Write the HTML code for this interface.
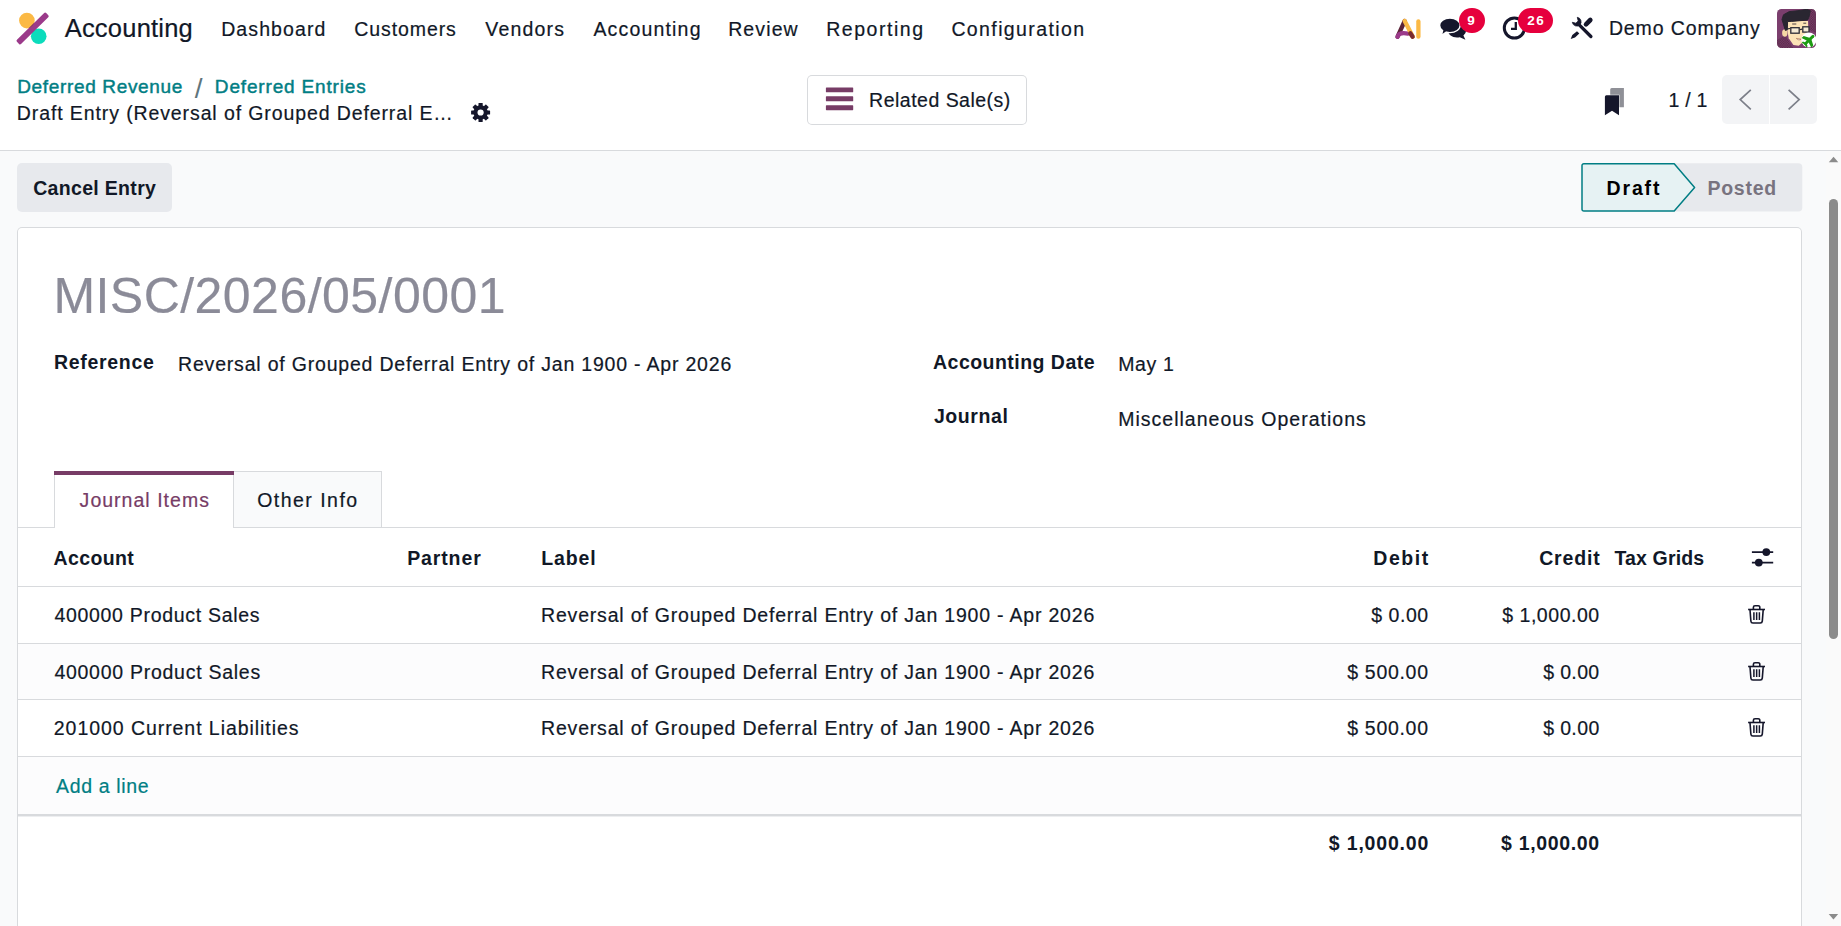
<!DOCTYPE html>
<html lang="en">
<head>
<meta charset="utf-8">
<title>Odoo - Draft Entry</title>
<style>
*{box-sizing:border-box;margin:0;padding:0}
html,body{width:1841px;height:926px;overflow:hidden;background:#fff}
body{position:relative;font-family:"Liberation Sans",sans-serif;color:#111827;-webkit-font-smoothing:antialiased}
.a{position:absolute;display:block}
.t{position:absolute;display:block;white-space:nowrap;font-weight:400;text-decoration:none;-webkit-text-stroke:.2px currentColor}
.b{font-weight:700;-webkit-text-stroke:0}
.m{-webkit-text-stroke:.45px currentColor}
svg{position:absolute;display:block;overflow:visible}
button{font:inherit;border:0;background:none;color:inherit}
ul,ol{list-style:none}
table{border-collapse:collapse}
.c-dark{color:#111827}.c-black{color:#000}.c-white{color:#fff}.c-teal{color:#017e84}
.c-sep{color:#5f757c;-webkit-text-stroke:0}.c-muted{color:#78737f}.c-title{color:#8b8b98}.c-brand{color:#773c66}
.navbar{background:#fff}
.cp{background:#fff;box-shadow:inset 0 -1px 0 0 #d8dadd}
.content{background:#f9fafb}
.badge{background:#e6003d;border-radius:12.5px}
.btn-sec{background:#e7e9ed;border-radius:5px}
.btn-out{background:#fff;box-shadow:inset 0 0 0 1px #d8dadd;border-radius:5px}
.pg{background:#f3f4f6}
.sheet{background:#fff;box-shadow:inset 0 0 0 1px #d8dadd;border-radius:5px 5px 0 0}
.hl{background:#d8dadd}
.stripe{background:#fcfcfd}
.tab-on{background:#fff;box-shadow:inset 0 4px 0 0 #773c66,inset 1px 0 0 0 #d8dadd,inset -1px 0 0 0 #d8dadd}
.tab-off{background:#f9fafb;box-shadow:inset 0 1px 0 0 #d8dadd,inset -1px 0 0 0 #d8dadd}
.sb{background:#fafafa}
.thumb{background:#8b8b8b;border-radius:4.5px}
</style>
</head>
<body>
 <header class="a navbar" style="left:0px;top:0px;width:1841px;height:58px">
  <a class="a brandlink" style="left:14px;top:6px;width:186px;height:46px">
   <svg viewBox="14 10 36 36" style="left:0px;top:4px;width:36px;height:36px"><circle cx="26.9" cy="20.6" r="7.8" fill="#fbb945"/><circle cx="38.7" cy="36.2" r="7.8" fill="#0bdcbc"/><rect x="12.100" y="25.600" width="41" height="5.800" rx="1.400" fill="#9b3a8a" transform="rotate(-44.500 32.600 28.500)"/><clipPath id="lgc"><circle cx="26.900" cy="20.600" r="7.800"/></clipPath><g clip-path="url(#lgc)"><rect x="12.100" y="25.600" width="41" height="5.800" fill="#8a4552" transform="rotate(-44.500 32.600 28.500)"/></g></svg>
   <span class="t c-dark" id="brand" style="left:50.67px;top:7px;font-size:25.5px;line-height:31px;letter-spacing:0.22px">Accounting</span>
  </a>
  <nav class="a menu" style="left:210px;top:6px;width:890px;height:46px">
   <a class="t c-dark" id="m1" style="left:11.17px;top:12px;font-size:19.5px;line-height:23px;letter-spacing:1.1px">Dashboard</a>
   <a class="t c-dark" id="m2" style="left:144.36px;top:12px;font-size:19.5px;line-height:23px;letter-spacing:0.9px">Customers</a>
   <a class="t c-dark" id="m3" style="left:275.33px;top:12px;font-size:19.5px;line-height:23px;letter-spacing:1.17px">Vendors</a>
   <a class="t c-dark" id="m4" style="left:383.4px;top:12px;font-size:19.5px;line-height:23px;letter-spacing:1.18px">Accounting</a>
   <a class="t c-dark" id="m5" style="left:518.17px;top:12px;font-size:19.5px;line-height:23px;letter-spacing:1.12px">Review</a>
   <a class="t c-dark" id="m6" style="left:616.17px;top:12px;font-size:19.5px;line-height:23px;letter-spacing:1.55px">Reporting</a>
   <a class="t c-dark" id="m7" style="left:741.4px;top:12px;font-size:19.5px;line-height:23px;letter-spacing:1.39px">Configuration</a>
  </nav>
  <div class="a systray" style="left:1385px;top:6px;width:440px;height:46px">
   <button class="a" style="left:4px;top:2px;width:40px;height:42px">
    <svg viewBox="1393 16 30 26" style="left:4px;top:8px;width:30px;height:26px"><path d="M1397.600 36.700L1404.700 21" stroke="#5c2338" stroke-width="4.300" stroke-linecap="round"/><path d="M1397.500 36.800C1398.800 32.600 1402.500 32.500 1408 33.600" stroke="#9b3a8a" stroke-width="4.300" stroke-linecap="round" fill="none"/><path d="M1404.700 21L1412.900 36.700" stroke="#fbb945" stroke-width="4.300" stroke-linecap="round"/><path d="M1410.300 33.200L1412.600 36.700" stroke="#7a2a2f" stroke-width="4.300" stroke-linecap="round"/><path d="M1418.400 21.400L1418.400 36.700" stroke="#fbb945" stroke-width="4.300" stroke-linecap="round"/></svg>
   </button>
   <button class="a" style="left:49px;top:0px;width:56px;height:46px">
    <svg viewBox="1437 15 32 27" style="left:3px;top:9px;width:32px;height:27px"><path d="M1457 23.6c5 0 9 3.1 9 7 0 1.9-1 3.6-2.6 4.9l2 4.2-5.6-2.4c-.9.2-1.8.3-2.8.3-5 0-9-3.100-9-7s4-7 9-7z" fill="#15162b"/><path d="M1449.9 18c5.700 0 10.300 3.300 10.300 7.300s-4.600 7.300-10.300 7.300c-1.300 0-2.500-.2-3.600-.5l-5 3.500 1.300-5c-1.900-1.300-3-3.200-3-5.300 0-4 4.600-7.300 10.300-7.300z" fill="#15162b" stroke="#fff" stroke-width="1.400"/></svg>
    <span class="a badge" style="left:24.5px;top:2px;width:26.5px;height:25px">
     <span class="t c-white b" id="b9" style="left:8.84px;top:5px;font-size:13.5px;line-height:16px">9</span>
    </span>
   </button>
   <button class="a" style="left:113px;top:0px;width:60px;height:46px">
    <svg viewBox="1501 14 28 28" style="left:3px;top:8px;width:28px;height:28px"><circle cx="1514.4" cy="28" r="10.1" fill="none" stroke="#15162b" stroke-width="3"/><path d="M1515.8 21.9V28.800H1511" fill="none" stroke="#15162b" stroke-width="2.300"/></svg>
    <span class="a badge" style="left:19.8px;top:2px;width:35.3px;height:25px">
     <span class="t c-white b" id="b26" style="left:9.56px;top:5px;font-size:13.5px;line-height:16px;letter-spacing:1.37px">26</span>
    </span>
   </button>
   <button class="a" style="left:179px;top:2px;width:34px;height:42px">
    <svg viewBox="1568 15 27 27" style="left:4px;top:7px;width:27px;height:27px"><path d="M1579 24.600L1590.900 36.500" stroke="#15162b" stroke-width="3.300" stroke-linecap="round"/><path d="M1572.300 22.300a4.600 4.600 0 0 0 7.600 2.600a4.600 4.600 0 0 0-2.600-7.600l.9 3.600-2.300 2.300z" fill="#15162b" stroke="#15162b" stroke-width=".8" stroke-linejoin="round"/><path d="M1590.300 20L1586 24.300" stroke="#15162b" stroke-width="4.600" stroke-linecap="round"/><path d="M1577 31.300l2.300 2.300-4.300 4-4.300 1.300 1.600-4z" fill="#15162b"/></svg>
   </button>
   <button class="a" style="left:217px;top:2px;width:166px;height:42px">
    <span class="t c-dark" id="company" style="left:6.89px;top:9px;font-size:19.5px;line-height:23px;letter-spacing:0.91px">Demo Company</span>
   </button>
   <button class="a" style="left:388px;top:0px;width:47px;height:46px">
    <svg viewBox="1777 9 39 39" style="left:4px;top:3px;width:39px;height:39px"><defs><clipPath id="avc"><rect x="1777" y="9" width="39" height="39" rx="4.500"/></clipPath><pattern id="avd" width="2.400" height="2.400" patternUnits="userSpaceOnUse"><rect width="1.200" height="1.200" fill="#4a2238"/><rect x="1.200" y="1.200" width="1.200" height="1.200" fill="#4a2238"/></pattern></defs><g clip-path="url(#avc)"><rect x="1777" y="9" width="39" height="39" fill="#7b3e6d"/><path d="M1808 9h8v24l-6-3z" fill="url(#avd)" opacity=".75"/><path d="M1777 40l8-5 8 13h-16z" fill="url(#avd)" opacity=".75"/><ellipse cx="1784.800" cy="33" rx="2.700" ry="3.700" fill="#f6d7a4"/><path d="M1787.300 21h20.700l.4 10.200-2.200 8.100-7.500 6.400-5.300-.6-4.700-6.900-1.400-8.200z" fill="#fce3b6"/><path d="M1785.400 30.500l-3.400-11 1.500-4.700 5.800-3.200 8.700-.9 8.800-1.400 3.500 1.400-1.200 5.900-1.400 3.400-16 1.400-4.100.1-.3 8.200z" fill="#2a2631" stroke="#2a2631" stroke-width="1" stroke-linejoin="round"/><path d="M1792.200 24h4.100M1803.300 23.200h2.900" stroke="#3a3038" stroke-width=".9"/><rect x="1790.800" y="27.700" width="8.400" height="5.500" fill="#f4ead4" stroke="#2c2c36" stroke-width="1.300"/><rect x="1802.800" y="26.800" width="6.200" height="5.300" fill="#f4ead4" stroke="#2c2c36" stroke-width="1.300"/><path d="M1799.800 29.600l2.400-.5M1790.200 28.500l-3 .3" stroke="#2c2c36" stroke-width="1.200"/><path d="M1796.300 38.400c1.500 1.700 3.300 1.900 4.900.8z" fill="#fff" stroke="#9a5a40" stroke-width=".6"/></g><circle cx="1808.900" cy="39.900" r="7.500" fill="#fff"/><g transform="rotate(-45 1809.200 40)" fill="#1e9b12"><rect x="1802.400" y="38.500" width="13.600" height="3" rx="1.500"/><path d="M1811.800 40l-3.600-6.800h-2.900l2.300 6.800-2.300 6.800h2.900z"/><path d="M1805 40l-1.300-3.300h-1.800l.9 3.300-.9 3.300h1.800z"/></g></svg>
   </button>
  </div>
 </header>
 <div class="a cp" style="left:0px;top:58px;width:1841px;height:93px">
  <nav class="a breadcrumbs" style="left:14px;top:12px;width:500px;height:66px">
   <a class="t c-teal m" id="bc1" style="left:3.16px;top:5px;font-size:19px;line-height:23px;letter-spacing:0.66px">Deferred Revenue</a>
   <span class="t c-sep" id="bcsep" style="left:180.75px;top:2px;font-size:28px;line-height:34px">/</span>
   <a class="t c-teal m" id="bc2" style="left:200.86px;top:5px;font-size:19px;line-height:23px;letter-spacing:0.83px">Deferred Entries</a>
   <span class="t c-dark" id="bc3" style="left:2.86px;top:32px;font-size:19.5px;line-height:23px;letter-spacing:0.89px">Draft Entry (Reversal of Grouped Deferral E…</span>
   <button class="a" style="left:452px;top:28px;width:30px;height:30px">
    <svg viewBox="470 102 22 22" style="left:4px;top:4px;width:22px;height:22px"><rect x="478.5" y="103" width="4.200" height="19" rx=".6" fill="#15162b" transform="rotate(0 480.600 112.500)"/><rect x="478.5" y="103" width="4.200" height="19" rx=".6" fill="#15162b" transform="rotate(45 480.600 112.500)"/><rect x="478.5" y="103" width="4.200" height="19" rx=".6" fill="#15162b" transform="rotate(90 480.600 112.500)"/><rect x="478.5" y="103" width="4.200" height="19" rx=".6" fill="#15162b" transform="rotate(135 480.600 112.500)"/><circle cx="480.600" cy="112.500" r="7.200" fill="#15162b"/><circle cx="480.600" cy="112.500" r="3.100" fill="#fff"/></svg>
   </button>
  </nav>
  <button class="a btn-out" style="left:807px;top:17px;width:220px;height:50px">
   <svg viewBox="825 86 30 26" style="left:18px;top:11px;width:30px;height:26px"><rect x="825.900" y="87.400" width="27.300" height="4.900" rx=".6" fill="#773c66"/><rect x="825.900" y="96.350" width="27.300" height="4.900" rx=".6" fill="#773c66"/><rect x="825.900" y="105.300" width="27.300" height="4.900" rx=".6" fill="#773c66"/></svg>
   <span class="t c-dark" id="rel" style="left:62.09px;top:14px;font-size:19.5px;line-height:23px;letter-spacing:0.49px">Related Sale(s)</span>
  </button>
  <div class="a pagerbox" style="left:1596px;top:17px;width:222px;height:50px">
   <button class="a" style="left:2px;top:5px;width:34px;height:40px">
    <svg viewBox="1603 86 23 31" style="left:5px;top:6px;width:23px;height:31px"><path d="M1611.700 87.900h12.200v19.400h-4.500v-12.500h-9.200v-5.400a1.500 1.500 0 0 1 1.500-1.500z" fill="#8f9097"/><path d="M1606.400 95.300h12.600v20l-7-4.600-7.100 4.600v-18.500a1.500 1.500 0 0 1 1.500-1.500z" fill="#15162b"/></svg>
   </button>
   <span class="t c-dark" id="pager" style="left:72.45px;top:14px;font-size:19.5px;line-height:23px;letter-spacing:0.26px">1 / 1</span>
   <button class="a pg" style="left:126px;top:0px;width:47px;height:48.8px;border-radius:5px 0 0 5px">
    <svg viewBox="1735 86 22 28" style="left:13px;top:11px;width:22px;height:28px"><path d="M1750.800 89.800L1740.200 99.600L1750.800 109.400" fill="none" stroke="#7c7f89" stroke-width="1.700"/></svg>
   </button>
   <button class="a pg" style="left:174px;top:0px;width:47.3px;height:48.8px;border-radius:0 5px 5px 0">
    <svg viewBox="1783 86 22 28" style="left:13px;top:11px;width:22px;height:28px"><path d="M1788.600 89.800L1799.200 99.600L1788.600 109.400" fill="none" stroke="#7c7f89" stroke-width="1.700"/></svg>
   </button>
  </div>
 </div>
 <main class="a content" style="left:0px;top:151px;width:1841px;height:775px">
  <div class="a statusrow" style="left:0px;top:0px;width:1826px;height:76px">
   <button class="a btn-sec" style="left:17px;top:12px;width:155px;height:49px">
    <span class="t c-dark b" id="cancel" style="left:16.18px;top:14px;font-size:19.5px;line-height:23px;letter-spacing:0.32px">Cancel Entry</span>
   </button>
   <div class="a statusbar" style="left:1578px;top:9px;width:228px;height:55px">
    <svg viewBox="1578 160 228 55" style="left:0px;top:0px;width:228px;height:55px"><path d="M1674 163.200h124.300a4 4 0 0 1 4 4v40.300a4 4 0 0 1-4 4H1674z" fill="#e7e9ed"/><path d="M1583.800 163.700H1674.200L1694.600 187.400L1674.200 211.100H1583.800a1.800 1.800 0 0 1-1.800-1.800V165.500a1.800 1.800 0 0 1 1.800-1.800z" fill="#e6f2f3" stroke="#017e84" stroke-width="1.500" stroke-linejoin="round"/></svg>
    <span class="t c-black b" id="draft" style="left:28.5px;top:17px;font-size:19.5px;line-height:23px;letter-spacing:1.86px">Draft</span>
    <span class="t c-muted b" id="posted" style="left:129.46px;top:17px;font-size:19.5px;line-height:23px;letter-spacing:0.75px">Posted</span>
   </div>
  </div>
  <div class="a sheet" style="left:17px;top:76px;width:1785px;height:720px">
   <h1 class="a" style="left:37px;top:35px;width:700px;height:70px">
    <span class="t c-title" id="title" style="left:-0.61px;top:4px;font-size:50px;line-height:60px;letter-spacing:0.46px">MISC/2026/05/0001</span>
   </h1>
   <div class="a" style="left:37px;top:118px;width:850px;height:50px">
    <label class="t c-dark b" id="lref" style="left:-0.08px;top:6px;font-size:19.5px;line-height:23px;letter-spacing:0.7px">Reference</label>
    <span class="t c-dark" id="vref" style="left:124.08px;top:8px;font-size:19.5px;line-height:23px;letter-spacing:0.8px">Reversal of Grouped Deferral Entry of Jan 1900 - Apr 2026</span>
   </div>
   <div class="a" style="left:915px;top:118px;width:850px;height:50px">
    <label class="t c-dark b" id="ldate" style="left:1.05px;top:6px;font-size:19.5px;line-height:23px;letter-spacing:0.47px">Accounting Date</label>
    <span class="t c-dark" id="vdate" style="left:186.17px;top:8px;font-size:19.5px;line-height:23px;letter-spacing:0.64px">May 1</span>
   </div>
   <div class="a" style="left:915px;top:173px;width:850px;height:50px">
    <label class="t c-dark b" id="ljour" style="left:1.9px;top:5px;font-size:19.5px;line-height:23px;letter-spacing:0.58px">Journal</label>
    <span class="t c-dark" id="vjour" style="left:186.17px;top:8px;font-size:19.5px;line-height:23px;letter-spacing:1.01px">Miscellaneous Operations</span>
   </div>
   <div class="a hl" style="left:1px;top:300px;width:1783px;height:1px"></div>
   <div class="a tab-on" style="left:37px;top:244px;width:180px;height:57px">
    <a class="t c-brand" id="tab1" style="left:25.61px;top:18px;font-size:19.5px;line-height:23px;letter-spacing:1.02px">Journal Items</a>
   </div>
   <div class="a tab-off" style="left:217px;top:244px;width:148px;height:56px">
    <a class="t c-dark" id="tab2" style="left:23.2px;top:18px;font-size:19.5px;line-height:23px;letter-spacing:1.47px">Other Info</a>
   </div>
   <div class="a list" role="table" style="left:1px;top:301px;width:1783px;height:330px">
    <div class="a thead" role="row" style="left:0px;top:0px;width:1783px;height:58px">
     <div class="a" style="left:0px;top:0px;width:372px;height:58px">
      <span class="t c-dark b" id="h1" style="left:35.62px;top:19px;font-size:19.5px;line-height:23px;letter-spacing:0.36px">Account</span>
     </div>
     <div class="a" style="left:372px;top:0px;width:135px;height:58px">
      <span class="t c-dark b" id="h2" style="left:17.14px;top:19px;font-size:19.5px;line-height:23px;letter-spacing:0.89px">Partner</span>
     </div>
     <div class="a" style="left:507px;top:0px;width:795px;height:58px">
      <span class="t c-dark b" id="h3" style="left:16.28px;top:19px;font-size:19.5px;line-height:23px;letter-spacing:0.87px">Label</span>
     </div>
     <div class="a" style="left:1302px;top:0px;width:125px;height:58px">
      <span class="t c-dark b" id="h4" style="left:53.28px;top:19px;font-size:19.5px;line-height:23px;letter-spacing:1.56px">Debit</span>
     </div>
     <div class="a" style="left:1427px;top:0px;width:162px;height:58px">
      <span class="t c-dark b" id="h5" style="left:94.17px;top:19px;font-size:19.5px;line-height:23px;letter-spacing:0.87px">Credit</span>
     </div>
     <div class="a" style="left:1589px;top:0px;width:128px;height:58px">
      <span class="t c-dark b" id="h6" style="left:7.39px;top:19px;font-size:19.5px;line-height:23px;letter-spacing:0.16px">Tax Grids</span>
     </div>
     <div class="a" style="left:1717px;top:0px;width:66px;height:58px">
      <button class="a" style="left:11px;top:16px;width:34px;height:28px">
       <svg viewBox="1750 546 26 22" style="left:4px;top:2px;width:26px;height:22px"><path d="M1751.900 552.100H1773.200M1751.900 562.600H1773.200" stroke="#15162b" stroke-width="1.600"/><circle cx="1766.300" cy="552.100" r="3.900" fill="#15162b"/><circle cx="1758.800" cy="562.600" r="3.900" fill="#15162b"/></svg>
      </button>
     </div>
    </div>
    <div class="a" role="row" style="left:0px;top:59px;width:1783px;height:56px">
     <div class="a" style="left:0px;top:0px;width:372px;height:56px">
      <span class="t c-dark" id="r1a" style="left:36.39px;top:17px;font-size:19.5px;line-height:23px;letter-spacing:0.7px">400000 Product Sales</span>
     </div>
     <div class="a" style="left:372px;top:0px;width:135px;height:56px"></div>
     <div class="a" style="left:507px;top:0px;width:795px;height:56px">
      <span class="t c-dark" id="r1l" style="left:16.09px;top:17px;font-size:19.5px;line-height:23px;letter-spacing:0.8px">Reversal of Grouped Deferral Entry of Jan 1900 - Apr 2026</span>
     </div>
     <div class="a" style="left:1302px;top:0px;width:125px;height:56px">
      <span class="t c-dark" id="r1d" style="left:51.29px;top:17px;font-size:19.5px;line-height:23px;letter-spacing:0.52px">$ 0.00</span>
     </div>
     <div class="a" style="left:1427px;top:0px;width:162px;height:56px">
      <span class="t c-dark" id="r1c" style="left:57.18px;top:17px;font-size:19.5px;line-height:23px;letter-spacing:0.54px">$ 1,000.00</span>
     </div>
     <div class="a" style="left:1589px;top:0px;width:128px;height:56px"></div>
     <div class="a" style="left:1717px;top:0px;width:66px;height:56px">
      <button class="a" style="left:9px;top:14px;width:26px;height:30px">
       <svg viewBox="1746 603 22 23" style="left:2px;top:2px;width:22px;height:23px"><g fill="none" stroke="#15162b" stroke-width="1.600" stroke-linejoin="round" transform="translate(0 0)"><path d="M1748.100 609.500H1765"/><path d="M1753.400 609.300V607.300a1.600 1.600 0 0 1 1.600-1.600h3.200a1.600 1.600 0 0 1 1.600 1.600V609.300"/><path d="M1750 609.800l.9 11.400a2 2 0 0 0 2 1.800h7.400a2 2 0 0 0 2-1.800l.9-11.400"/><path d="M1753.900 612.300V620M1756.650 612.300V620M1759.400 612.300V620" stroke-width="1.500"/></g></svg>
      </button>
     </div>
    </div>
    <div class="a stripe" role="row" style="left:0px;top:116px;width:1783px;height:55px">
     <div class="a" style="left:0px;top:0px;width:372px;height:55px">
      <span class="t c-dark" id="r2a" style="left:36.4px;top:17px;font-size:19.5px;line-height:23px;letter-spacing:0.73px">400000 Product Sales</span>
     </div>
     <div class="a" style="left:372px;top:0px;width:135px;height:55px"></div>
     <div class="a" style="left:507px;top:0px;width:795px;height:55px">
      <span class="t c-dark" id="r2l" style="left:16.09px;top:17px;font-size:19.5px;line-height:23px;letter-spacing:0.8px">Reversal of Grouped Deferral Entry of Jan 1900 - Apr 2026</span>
     </div>
     <div class="a" style="left:1302px;top:0px;width:125px;height:55px">
      <span class="t c-dark" id="r2d" style="left:27.18px;top:17px;font-size:19.5px;line-height:23px;letter-spacing:0.7px">$ 500.00</span>
     </div>
     <div class="a" style="left:1427px;top:0px;width:162px;height:55px">
      <span class="t c-dark" id="r2c" style="left:98.14px;top:17px;font-size:19.5px;line-height:23px;letter-spacing:0.37px">$ 0.00</span>
     </div>
     <div class="a" style="left:1589px;top:0px;width:128px;height:55px"></div>
     <div class="a" style="left:1717px;top:0px;width:66px;height:55px">
      <button class="a" style="left:9px;top:14px;width:26px;height:30px">
       <svg viewBox="1746 660 22 23" style="left:2px;top:2px;width:22px;height:23px"><g fill="none" stroke="#15162b" stroke-width="1.600" stroke-linejoin="round" transform="translate(0 57)"><path d="M1748.100 609.500H1765"/><path d="M1753.400 609.300V607.300a1.600 1.600 0 0 1 1.600-1.600h3.200a1.600 1.600 0 0 1 1.600 1.600V609.300"/><path d="M1750 609.800l.9 11.400a2 2 0 0 0 2 1.800h7.400a2 2 0 0 0 2-1.800l.9-11.400"/><path d="M1753.900 612.300V620M1756.650 612.300V620M1759.400 612.300V620" stroke-width="1.500"/></g></svg>
      </button>
     </div>
    </div>
    <div class="a" role="row" style="left:0px;top:172px;width:1783px;height:56px">
     <div class="a" style="left:0px;top:0px;width:372px;height:56px">
      <span class="t c-dark" id="r3a" style="left:35.83px;top:17px;font-size:19.5px;line-height:23px;letter-spacing:0.94px">201000 Current Liabilities</span>
     </div>
     <div class="a" style="left:372px;top:0px;width:135px;height:56px"></div>
     <div class="a" style="left:507px;top:0px;width:795px;height:56px">
      <span class="t c-dark" id="r3l" style="left:16.09px;top:17px;font-size:19.5px;line-height:23px;letter-spacing:0.8px">Reversal of Grouped Deferral Entry of Jan 1900 - Apr 2026</span>
     </div>
     <div class="a" style="left:1302px;top:0px;width:125px;height:56px">
      <span class="t c-dark" id="r3d" style="left:27.18px;top:17px;font-size:19.5px;line-height:23px;letter-spacing:0.7px">$ 500.00</span>
     </div>
     <div class="a" style="left:1427px;top:0px;width:162px;height:56px">
      <span class="t c-dark" id="r3c" style="left:98.14px;top:17px;font-size:19.5px;line-height:23px;letter-spacing:0.38px">$ 0.00</span>
     </div>
     <div class="a" style="left:1589px;top:0px;width:128px;height:56px"></div>
     <div class="a" style="left:1717px;top:0px;width:66px;height:56px">
      <button class="a" style="left:9px;top:14px;width:26px;height:30px">
       <svg viewBox="1746 716 22 23" style="left:2px;top:2px;width:22px;height:23px"><g fill="none" stroke="#15162b" stroke-width="1.600" stroke-linejoin="round" transform="translate(0 113)"><path d="M1748.100 609.500H1765"/><path d="M1753.400 609.300V607.300a1.600 1.600 0 0 1 1.600-1.600h3.200a1.600 1.600 0 0 1 1.600 1.600V609.300"/><path d="M1750 609.800l.9 11.400a2 2 0 0 0 2 1.800h7.400a2 2 0 0 0 2-1.800l.9-11.400"/><path d="M1753.900 612.300V620M1756.650 612.300V620M1759.400 612.300V620" stroke-width="1.500"/></g></svg>
      </button>
     </div>
    </div>
    <div class="a stripe" role="row" style="left:0px;top:229px;width:1783px;height:57px">
     <a class="t c-teal" id="add" style="left:37.97px;top:18px;font-size:19.5px;line-height:23px;letter-spacing:0.66px">Add a line</a>
    </div>
    <div class="a" role="row" style="left:0px;top:288px;width:1783px;height:60px">
     <span class="t c-dark b" id="td" style="left:1310.82px;top:16px;font-size:19.5px;line-height:23px;letter-spacing:0.82px">$ 1,000.00</span>
     <span class="t c-dark b" id="tc" style="left:1483.11px;top:16px;font-size:19.5px;line-height:23px;letter-spacing:0.66px">$ 1,000.00</span>
    </div>
    <div class="a hl" style="left:0px;top:58px;width:1783px;height:1px"></div>
    <div class="a hl" style="left:0px;top:115px;width:1783px;height:1px"></div>
    <div class="a hl" style="left:0px;top:171px;width:1783px;height:1px"></div>
    <div class="a hl" style="left:0px;top:228px;width:1783px;height:1px"></div>
    <div class="a hl" style="left:0px;top:286px;width:1783px;height:2px"></div>
    <div class="a hl" style="left:0px;top:288px;width:1783px;height:1px;opacity:.45"></div>
   </div>
  </div>
  <div class="a sb" style="left:1826px;top:0px;width:15px;height:775px">
   <svg viewBox="1827 155 13 9" style="left:1px;top:4px;width:13px;height:9px"><path d="M1828.800 162.200L1833.550 156.700L1838.300 162.200z" fill="#8b8b8b"/></svg>
   <div class="a thumb" style="left:3px;top:48px;width:9px;height:440px"></div>
   <svg viewBox="1827 912 13 9" style="left:1px;top:761px;width:13px;height:9px"><path d="M1828.700 913.900L1833.450 919.400L1838.200 913.900z" fill="#8b8b8b"/></svg>
  </div>
 </main>
</body>
</html>
